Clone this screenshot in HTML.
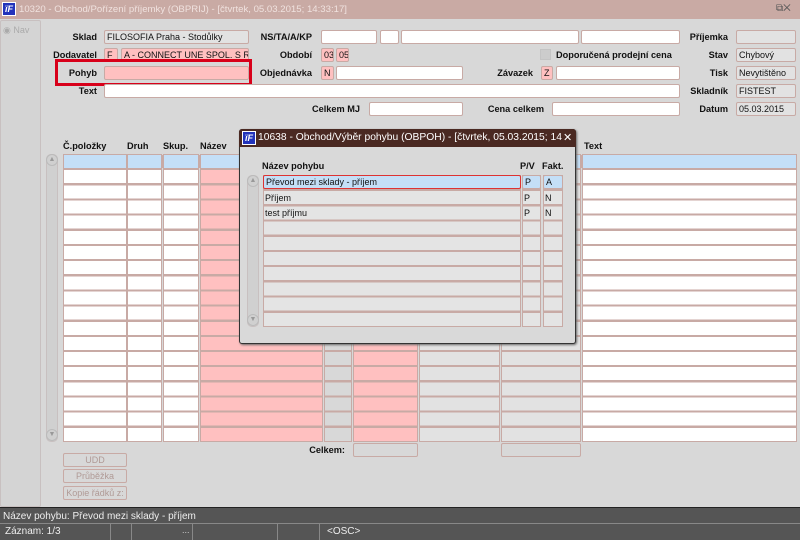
<!DOCTYPE html>
<html><head><meta charset="utf-8"><style>
*{box-sizing:border-box;margin:0;padding:0}
body{width:800px;height:540px;background:#d8d8d8;font-family:"Liberation Sans",Arial,sans-serif;font-size:9px;color:#111;position:relative;overflow:hidden}
.a{position:absolute}
.f{position:absolute;height:14px;border:1px solid #c8aaa5;border-radius:2px;background:#fff;font-size:9px;line-height:12px;padding-left:2px;white-space:nowrap;overflow:hidden}
.g{background:#e2e2e2}.p{background:#ffc0c0}
.l{position:absolute;font-weight:bold;font-size:9.2px;text-align:right;line-height:14px;white-space:nowrap}
.col{position:absolute;top:154px;height:288px;border-left:1px solid #c8aaa5;border-right:1px solid #c8aaa5}
.btn{position:absolute;left:63px;width:64px;height:14px;border:1px solid #c8aaa5;border-radius:2px;color:#b09a96;text-align:center;font-size:9px;line-height:12px}
.sb{position:absolute;width:12px;border:1px solid #c8c0c0;border-radius:5px;background:#d0d0d0}
.sa{position:absolute;width:12px;height:12px;border:1px solid #bbb;border-radius:6px;color:#999;font-size:7px;text-align:center;line-height:10px}
</style></head><body>
<div class="a" style="left:0;top:0;width:800px;height:19px;background:#c9aaa4"></div>
<div class="a" style="left:2px;top:2px;width:14px;height:14px;background:#2233bb;border:1px solid #fff;color:#fff;font-size:9px;font-weight:bold;font-style:italic;line-height:12px;text-align:center">ïF</div>
<div class="a" style="left:19px;top:4px;color:#f0e2df;font-size:9.6px">10320 - Obchod/Pořízení příjemky (OBPRIJ) - [čtvrtek, 05.03.2015; 14:33:17]</div>
<div class="a" style="left:776px;top:3px;color:#555;font-size:10px">⧉✕</div>
<div class="a" style="left:0;top:20px;width:41px;height:487px;border:1px solid #c8c0c0;border-radius:2px;background:#d4d4d4"></div>
<div class="a" style="left:3px;top:25px;color:#aaa;font-size:9px">◉ Nav</div>

<div class="l" style="left:40px;top:30px;width:57px">Sklad</div>
<div class="f g" style="left:104px;top:30px;width:145px">FILOSOFIA Praha - Stodůlky</div>
<div class="l" style="left:250px;top:30px;width:62px">NS/TA/A/KP</div>
<div class="f" style="left:321px;top:30px;width:56px"></div>
<div class="f" style="left:380px;top:30px;width:19px"></div>
<div class="f" style="left:401px;top:30px;width:178px"></div>
<div class="f" style="left:581px;top:30px;width:99px"></div>
<div class="l" style="left:680px;top:30px;width:48px">Příjemka</div>
<div class="f g" style="left:736px;top:30px;width:60px"></div>

<div class="l" style="left:40px;top:48px;width:57px">Dodavatel</div>
<div class="f p" style="left:104px;top:48px;width:14px">F</div>
<div class="f p" style="left:121px;top:48px;width:128px">A - CONNECT UNE SPOL. S R. O</div>
<div class="l" style="left:260px;top:48px;width:52px">Období</div>
<div class="f p" style="left:321px;top:48px;width:13px">03</div>
<div class="f p" style="left:336px;top:48px;width:13px">05</div>
<div class="a" style="left:540px;top:49px;width:11px;height:11px;background:#ccc;border:1px solid #c4c4c4"></div>
<div class="l" style="left:556px;top:48px">Doporučená prodejní cena</div>
<div class="l" style="left:680px;top:48px;width:48px">Stav</div>
<div class="f g" style="left:736px;top:48px;width:60px">Chybový</div>

<div class="l" style="left:40px;top:66px;width:57px">Pohyb</div>
<div class="f p" style="left:104px;top:66px;width:145px"></div>
<div class="a" style="left:55px;top:59px;width:197px;height:27px;border:3px solid #d8001a"></div>
<div class="l" style="left:250px;top:66px;width:62px">Objednávka</div>
<div class="f p" style="left:321px;top:66px;width:13px">N</div>
<div class="f" style="left:336px;top:66px;width:127px"></div>
<div class="l" style="left:480px;top:66px;width:53px">Závazek</div>
<div class="f p" style="left:541px;top:66px;width:12px">Z</div>
<div class="f" style="left:556px;top:66px;width:124px"></div>
<div class="l" style="left:680px;top:66px;width:48px">Tisk</div>
<div class="f g" style="left:736px;top:66px;width:60px">Nevytištěno</div>

<div class="l" style="left:40px;top:84px;width:57px">Text</div>
<div class="f" style="left:104px;top:84px;width:576px"></div>
<div class="l" style="left:680px;top:84px;width:48px">Skladník</div>
<div class="f g" style="left:736px;top:84px;width:60px">FISTEST</div>

<div class="l" style="left:290px;top:102px;width:70px">Celkem MJ</div>
<div class="f" style="left:369px;top:102px;width:94px"></div>
<div class="l" style="left:470px;top:102px;width:74px">Cena celkem</div>
<div class="f" style="left:552px;top:102px;width:128px"></div>
<div class="l" style="left:680px;top:102px;width:48px">Datum</div>
<div class="f g" style="left:736px;top:102px;width:60px">05.03.2015</div>

<div class="l" style="left:63px;top:139px">Č.položky</div>
<div class="l" style="left:127px;top:139px">Druh</div>
<div class="l" style="left:163px;top:139px">Skup.</div>
<div class="l" style="left:200px;top:139px">Název</div>
<div class="l" style="left:584px;top:139px">Text</div>

<div class="sb" style="left:46px;top:154px;height:288px"></div>
<div class="sa" style="left:46px;top:154px">▲</div>
<div class="sa" style="left:46px;top:429px">▼</div>

<div class="col" style="left:63px;width:64px;background:repeating-linear-gradient(#c8aaa5 0 1px,#fff 1px 14px,#c8aaa5 14px 15.16px)"></div>
<div class="col" style="left:127px;width:35px;background:repeating-linear-gradient(#c8aaa5 0 1px,#fff 1px 14px,#c8aaa5 14px 15.16px)"></div>
<div class="col" style="left:163px;width:36px;background:repeating-linear-gradient(#c8aaa5 0 1px,#fff 1px 14px,#c8aaa5 14px 15.16px)"></div>
<div class="col" style="left:200px;width:123px;background:repeating-linear-gradient(#c8aaa5 0 1px,#ffc0c0 1px 14px,#c8aaa5 14px 15.16px)"></div>
<div class="col" style="left:324px;width:28px;background:repeating-linear-gradient(#c8aaa5 0 1px,#d8d8d8 1px 14px,#c8aaa5 14px 15.16px)"></div>
<div class="col" style="left:353px;width:65px;background:repeating-linear-gradient(#c8aaa5 0 1px,#ffc0c0 1px 14px,#c8aaa5 14px 15.16px)"></div>
<div class="col" style="left:419px;width:81px;background:repeating-linear-gradient(#c8aaa5 0 1px,#e2e2e2 1px 14px,#c8aaa5 14px 15.16px)"></div>
<div class="col" style="left:501px;width:80px;background:repeating-linear-gradient(#c8aaa5 0 1px,#e2e2e2 1px 14px,#c8aaa5 14px 15.16px)"></div>
<div class="col" style="left:582px;width:215px;background:repeating-linear-gradient(#c8aaa5 0 1px,#fff 1px 14px,#c8aaa5 14px 15.16px)"></div>
<div class="a" style="left:64px;top:155px;width:732px;height:13px;background:#c4dff7"></div>
<div class="a" style="left:126px;top:155px;width:2px;height:13px;background:#c8aaa5"></div>
<div class="a" style="left:161px;top:155px;width:3px;height:13px;background:#c8aaa5"></div>
<div class="a" style="left:198px;top:155px;width:3px;height:13px;background:#c8aaa5"></div>
<div class="a" style="left:580px;top:155px;width:3px;height:13px;background:#c8aaa5"></div>

<div class="l" style="left:290px;top:443px;width:55px">Celkem:</div>
<div class="f" style="left:353px;top:443px;width:65px;background:#d8d8d8"></div>
<div class="f" style="left:501px;top:443px;width:80px;background:#d8d8d8"></div>
<div class="btn" style="top:453px">UDD</div>
<div class="btn" style="top:469px">Průběžka</div>
<div class="btn" style="top:486px">Kopie řádků z:</div>

<!-- dialog -->
<div class="a" style="left:239px;top:129px;width:337px;height:215px;background:#d9d9d9;border:1px solid #333;border-radius:3px;box-shadow:1px 1px 2px #666"></div>
<div class="a" style="left:239px;top:129px;width:337px;height:18px;background:#4a2922;border-radius:3px 3px 0 0"></div>
<div class="a" style="left:242px;top:131px;width:14px;height:14px;background:#2233bb;border:1px solid #fff;color:#fff;font-size:9px;font-weight:bold;font-style:italic;line-height:12px;text-align:center">ïF</div>
<div class="a" style="left:258px;top:132px;color:#fff;font-size:10.3px;white-space:nowrap;width:304px;overflow:hidden">10638 - Obchod/Výběr pohybu (OBPOH) - [čtvrtek, 05.03.2015; 14:34:1</div>
<div class="a" style="left:563px;top:131px;color:#fff;font-size:11px">✕</div>
<div class="l" style="left:262px;top:159px">Název pohybu</div>
<div class="l" style="left:520px;top:159px">P/V</div>
<div class="l" style="left:542px;top:159px">Fakt.</div>
<div class="sb" style="left:247px;top:175px;height:152px"></div>
<div class="sa" style="left:247px;top:175px">▲</div>
<div class="sa" style="left:247px;top:314px">▼</div>
<div class="col" style="left:263px;top:175px;width:258px;height:152px;background:repeating-linear-gradient(#c8aaa5 0 1px,#e4e4e4 1px 14px,#c8aaa5 14px 15.2px)"></div>
<div class="col" style="left:522px;top:175px;width:19px;height:152px;background:repeating-linear-gradient(#c8aaa5 0 1px,#e4e4e4 1px 14px,#c8aaa5 14px 15.2px)"></div>
<div class="col" style="left:543px;top:175px;width:20px;height:152px;background:repeating-linear-gradient(#c8aaa5 0 1px,#e4e4e4 1px 14px,#c8aaa5 14px 15.2px)"></div>
<div class="f" style="left:263px;top:175px;width:258px;background:#c4dff7;border-color:#d33">Převod mezi sklady - příjem</div>
<div class="f" style="left:522px;top:175px;width:19px;background:#c4dff7">P</div>
<div class="f" style="left:543px;top:175px;width:20px;background:#c4dff7">A</div>
<div class="a" style="left:265px;top:192px;line-height:12px">Příjem</div>
<div class="a" style="left:524px;top:192px;line-height:12px">P</div>
<div class="a" style="left:545px;top:192px;line-height:12px">N</div>
<div class="a" style="left:265px;top:207px;line-height:12px">test příjmu</div>
<div class="a" style="left:524px;top:207px;line-height:12px">P</div>
<div class="a" style="left:545px;top:207px;line-height:12px">N</div>

<!-- status -->
<div class="a" style="left:0;top:507px;width:800px;height:33px;background:#555;border-top:1px solid #222"></div>
<div class="a" style="left:3px;top:510px;color:#eee;font-size:10px;line-height:13px">Název pohybu: Převod mezi sklady - příjem</div>
<div class="a" style="left:0;top:523px;width:800px;height:1px;background:#888"></div>
<div class="a" style="left:5px;top:525px;color:#eee;font-size:10px;line-height:13px">Záznam: 1/3</div>
<div class="a" style="left:110px;top:524px;width:1px;height:16px;background:#888"></div>
<div class="a" style="left:131px;top:524px;width:1px;height:16px;background:#888"></div>
<div class="a" style="left:192px;top:524px;width:1px;height:16px;background:#888"></div>
<div class="a" style="left:277px;top:524px;width:1px;height:16px;background:#888"></div>
<div class="a" style="left:319px;top:524px;width:1px;height:16px;background:#888"></div>
<div class="a" style="left:182px;top:525px;color:#ccc;font-size:9px">...</div>
<div class="a" style="left:327px;top:525px;color:#eee;font-size:10px;line-height:13px">&lt;OSC&gt;</div>
</body></html>
